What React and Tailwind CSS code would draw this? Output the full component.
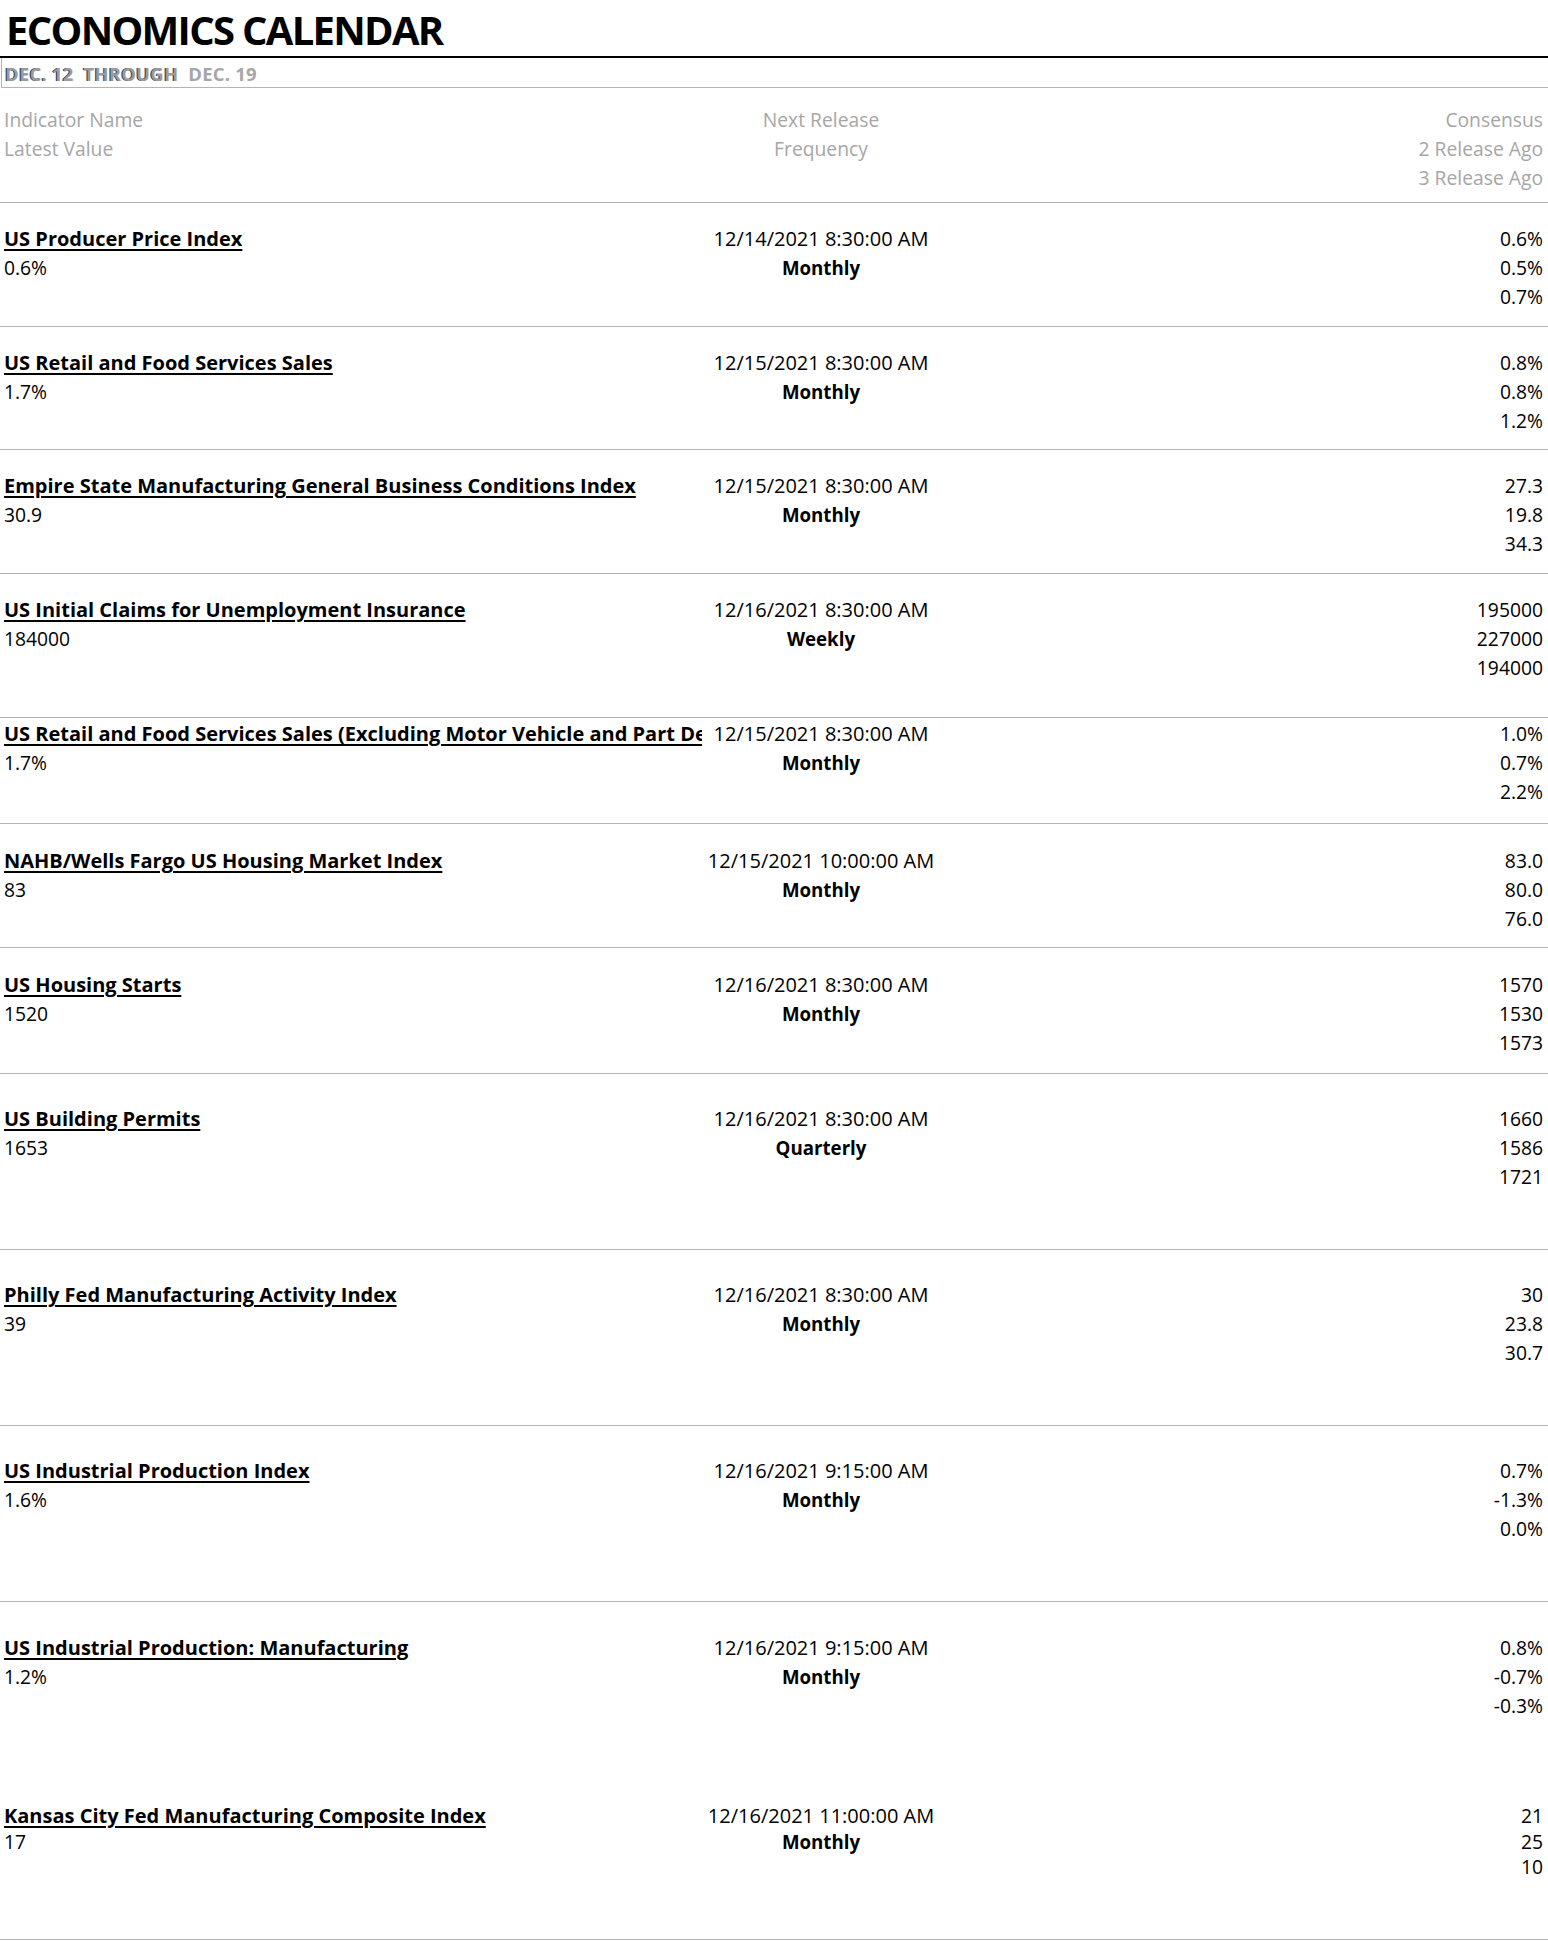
import React from "react";

const rows = [
  { name: "US Producer Price Index", latest: "0.6%", date: "12/14/2021 8:30:00 AM", freq: "Monthly", vals: ["0.6%", "0.5%", "0.7%"], cls: "h-[124px] pt-[21px] border-b" },
  { name: "US Retail and Food Services Sales", latest: "1.7%", date: "12/15/2021 8:30:00 AM", freq: "Monthly", vals: ["0.8%", "0.8%", "1.2%"], cls: "h-[123px] pt-[21px] border-b" },
  { name: "Empire State Manufacturing General Business Conditions Index", latest: "30.9", date: "12/15/2021 8:30:00 AM", freq: "Monthly", vals: ["27.3", "19.8", "34.3"], cls: "h-[124px] pt-[21px] border-b" },
  { name: "US Initial Claims for Unemployment Insurance", latest: "184000", date: "12/16/2021 8:30:00 AM", freq: "Weekly", vals: ["195000", "227000", "194000"], cls: "h-[144px] pt-[21px] border-b" },
  { name: "US Retail and Food Services Sales (Excluding Motor Vehicle and Part Dealers)", latest: "1.7%", date: "12/15/2021 8:30:00 AM", freq: "Monthly", vals: ["1.0%", "0.7%", "2.2%"], cls: "h-[106px] pt-[1px] border-b" },
  { name: "NAHB/Wells Fargo US Housing Market Index", latest: "83", date: "12/15/2021 10:00:00 AM", freq: "Monthly", vals: ["83.0", "80.0", "76.0"], cls: "h-[124px] pt-[22px] border-b" },
  { name: "US Housing Starts", latest: "1520", date: "12/16/2021 8:30:00 AM", freq: "Monthly", vals: ["1570", "1530", "1573"], cls: "h-[126px] pt-[22px] border-b" },
  { name: "US Building Permits", latest: "1653", date: "12/16/2021 8:30:00 AM", freq: "Quarterly", vals: ["1660", "1586", "1721"], cls: "h-[176px] pt-[30px] border-b" },
  { name: "Philly Fed Manufacturing Activity Index", latest: "39", date: "12/16/2021 8:30:00 AM", freq: "Monthly", vals: ["30", "23.8", "30.7"], cls: "h-[176px] pt-[30px] border-b" },
  { name: "US Industrial Production Index", latest: "1.6%", date: "12/16/2021 9:15:00 AM", freq: "Monthly", vals: ["0.7%", "-1.3%", "0.0%"], cls: "h-[176px] pt-[30px] border-b" },
  { name: "US Industrial Production: Manufacturing", latest: "1.2%", date: "12/16/2021 9:15:00 AM", freq: "Monthly", vals: ["0.8%", "-0.7%", "-0.3%"], cls: "h-[201px] pt-[31px]" },
];

function Row({ r, lh = "leading-[29px]" }) {
  return (
    <div className={`grid grid-cols-[702px_238px_1fr] border-[#b4b4b4] ${r.cls} ${lh}`}>
      <div className="overflow-hidden whitespace-nowrap pl-[4px]">
        <div className="overflow-hidden text-[20px] font-bold underline decoration-2 underline-offset-[3px] text-black">{r.name}</div>
        <div>{r.latest}</div>
      </div>
      <div className="text-center whitespace-nowrap">
        <div className="text-[20px]">{r.date}</div>
        <div className="text-[18.7px] font-bold">{r.freq}</div>
      </div>
      <div className="text-right pr-[5px]">
        {r.vals.map((v, i) => (
          <div key={i}>{v}</div>
        ))}
      </div>
    </div>
  );
}

export default function App() {
  return (
    <div className="w-[1548px] bg-white text-black font-['Open_Sans',sans-serif] text-[19.3px]">
      {/* Title */}
      <div className="h-[58px] border-b-2 border-black pl-[6px] flex items-center">
        <h1 className="text-[40px] font-bold leading-none tracking-[-1.7px] pt-[4px]">ECONOMICS CALENDAR</h1>
      </div>
      {/* Subtitle */}
      <div className="h-[30px] border-l border-b border-[#b4b4b4] ml-[1px] pl-[3px] flex items-center">
        <span className="text-[18.5px] font-bold leading-none pt-[4px] whitespace-pre tracking-[0.2px]">
          <span className="text-[#9a9aa0] [text-shadow:-1px_0_0_#243447]">DEC. 12  THROUGH</span>
          <span className="text-[#a6a6a6]">  DEC. 19</span>
        </span>
      </div>
      {/* Header */}
      <div className="grid grid-cols-[702px_238px_1fr] h-[115px] pt-[17px] border-b border-[#b4b4b4] leading-[29px] text-[#a6a6a6]">
        <div className="pl-[4px]">
          <div>Indicator Name</div>
          <div>Latest Value</div>
        </div>
        <div className="text-center">
          <div>Next Release</div>
          <div>Frequency</div>
        </div>
        <div className="text-right pr-[5px]">
          <div>Consensus</div>
          <div>2 Release Ago</div>
          <div>3 Release Ago</div>
        </div>
      </div>
      {rows.map((r, i) => (
        <Row key={i} r={r} />
      ))}
      <Row
        lh="leading-[25.5px]"
        r={{
          name: "Kansas City Fed Manufacturing Composite Index",
          latest: "17",
          date: "12/16/2021 11:00:00 AM",
          freq: "Monthly",
          vals: ["21", "25", "10"],
          cls: "h-[137px] pt-0 border-b",
        }}
      />
    </div>
  );
}
